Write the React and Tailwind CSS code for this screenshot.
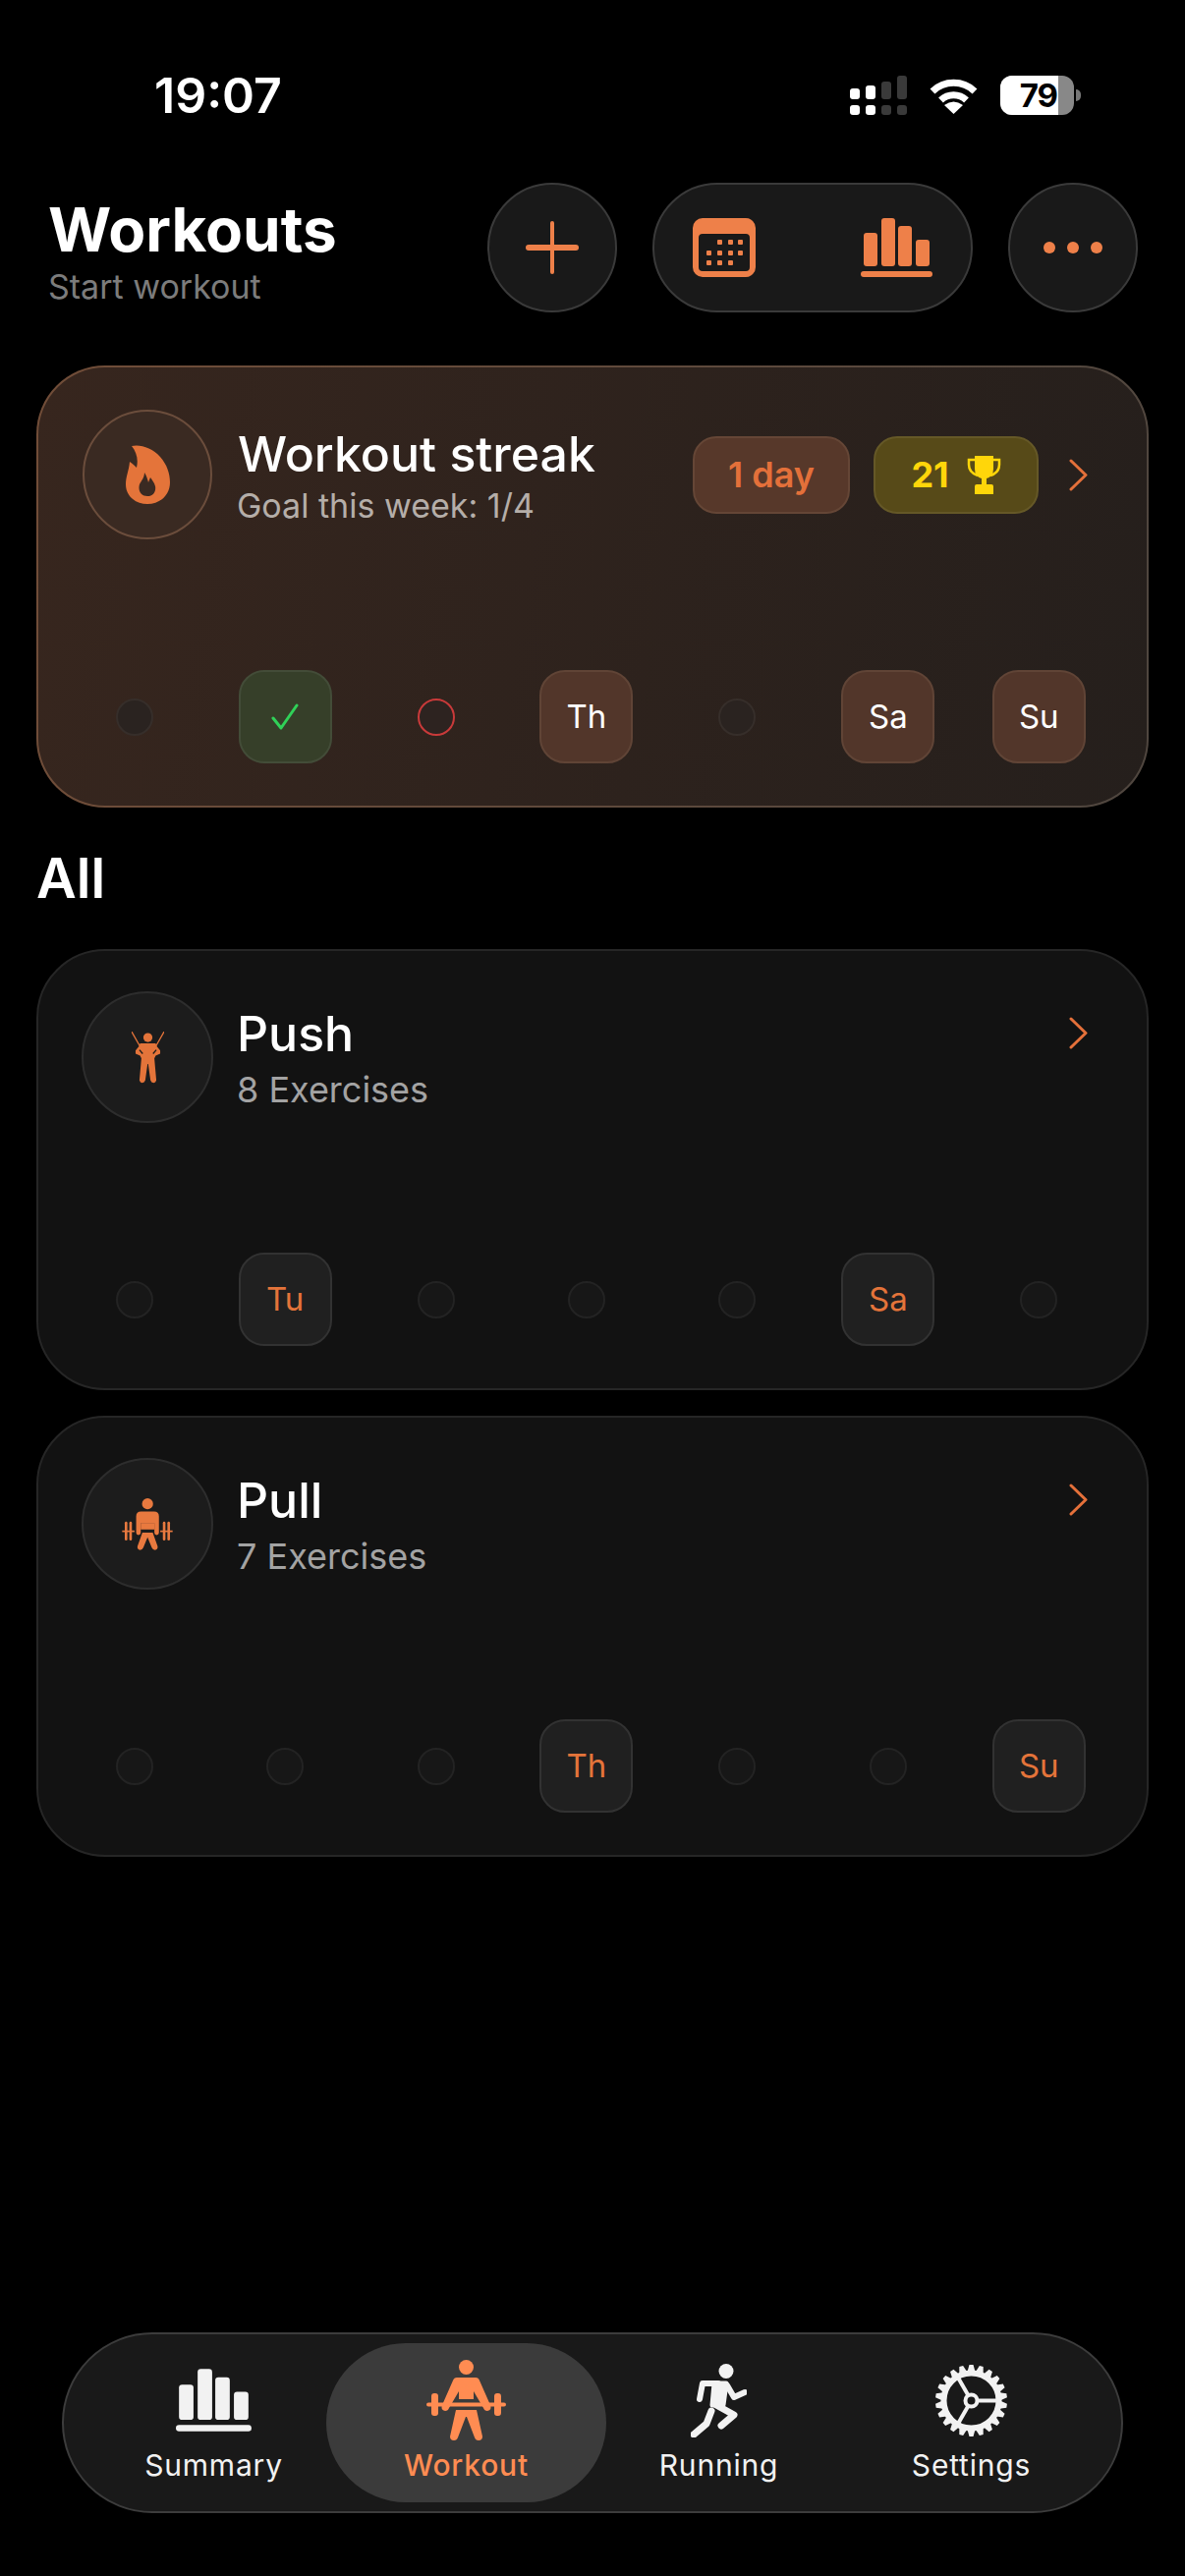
import React from 'react';

const ORANGE = '#ee8049';

const CalendarIcon = () => (
  <svg width="64" height="60" viewBox="0 0 64 60">
    <path fillRule="evenodd" fill={ORANGE} d="M10 0h44a10 10 0 0 1 10 10v40a10 10 0 0 1-10 10H10A10 10 0 0 1 0 50V10A10 10 0 0 1 10 0ZM10 16a4 4 0 0 0-4 4v30a4 4 0 0 0 4 4h44a4 4 0 0 0 4-4V20a4 4 0 0 0-4-4Z" />
    {[[25, 22], [36, 22], [46, 22], [14, 33], [25, 33], [36, 33], [46, 33], [14, 43], [25, 43], [36, 43]].map(([x, y]) => (
      <rect key={`${x}-${y}`} x={x} y={y} width="5" height="5" rx="1" fill={ORANGE} />
    ))}
  </svg>
);

const BarsIcon = ({ color, width = 73, height = 60 }) => (
  <svg width={width} height={height} viewBox="0 0 73 60" fill={color}>
    <rect x="3" y="15" width="14" height="34" rx="3" />
    <rect x="21" y="0" width="14" height="49" rx="3" />
    <rect x="38" y="8" width="14" height="41" rx="3" />
    <rect x="56" y="22" width="14" height="27" rx="3" />
    <rect x="0" y="54" width="73" height="6" rx="3" />
  </svg>
);

const Chevron = () => (
  <svg width="19" height="33" viewBox="0 0 19 33" fill="none" stroke="#e4703a" strokeWidth="3" strokeLinecap="round" strokeLinejoin="round">
    <path d="M2 2l15 14.500L2 31" />
  </svg>
);

const FlameIcon = () => (
  <svg width="45" height="60" viewBox="0 0 45 60">
    <path fillRule="evenodd" fill="#e4743a" d="M6 1C15-1 27 3 35 12 42 20 45 29 45 38 45 51 35 60 22 60 10 60 0 52 0 40 0 32 3 27 4 17 7 19 9 21 11 23 13 15 11 7 6 1ZM19 28C19 33 16 36 14 40 12 47 16 52 22 52 28 52 31 47 30 42 29 38 27 36 25 33L23 38C22 34 21 31 19 28Z" />
  </svg>
);

const PushIcon = () => (
  <svg width="33" height="53" viewBox="0 0 100 160" fill="#e4743a">
    <circle cx="50" cy="18" r="14" />
    <path d="M0 0L26 46M100 0L74 46" stroke="#e4743a" strokeWidth="4" />
    <path d="M26 36H74L78 46 88 58V68L74 74 70 82 76 150Q74 158 68 158 60 158 58 150L51 100H49L42 150Q40 158 32 158 26 158 24 150L30 82 26 74 12 68V58L22 46Z" />
    <path d="M24 56L34 68M76 56L66 68" stroke="#1b1b1b" strokeWidth="4" />
  </svg>
);

const PullIcon = () => (
  <svg width="52" height="53" viewBox="0 0 155 160" fill="#e8793f">
    <circle cx="78" cy="17" r="17" />
    <path d="M58 41H98Q113 41 113 56V106Q113 113 106 113 99 113 99 106V76H57V106Q57 113 50 113 43 113 43 106V56Q43 41 58 41Z" />
    <rect x="57" y="76" width="42" height="20" />
    <path d="M62 106H94L109 148Q110 158 101 159 94 159 91 152L78 120 65 152Q62 159 55 159 46 158 47 148Z" />
    <rect x="0" y="99" width="38" height="5" />
    <rect x="117" y="99" width="38" height="5" />
    <rect x="8" y="72" width="8" height="58" rx="4" />
    <rect x="22" y="72" width="8" height="58" rx="4" />
    <rect x="125" y="72" width="8" height="58" rx="4" />
    <rect x="139" y="72" width="8" height="58" rx="4" />
  </svg>
);

const LifterIcon = () => (
  <svg width="81" height="83" viewBox="0 0 81 83" fill="#ff8c52">
    <circle cx="40.500" cy="7.500" r="7.500" />
    <path d="M31 18H50Q53 18 54 21L65 46Q67 51 62 52 59 52 58 49L48 32V40H33V32L23 49Q22 52 19 52 14 51 16 46L27 21Q28 18 31 18Z" />
    <rect x="0" y="43.500" width="81" height="4" rx="2" />
    <rect x="5" y="34" width="7" height="23" rx="3" />
    <rect x="69" y="34" width="7" height="23" rx="3" />
    <path d="M30 51H51L57 78Q57 82 53 82 50 82 49 79L41 58H40L32 79Q31 82 28 82 24 82 24 78Z" />
  </svg>
);

const RunnerIcon = () => (
  <svg width="57" height="75" viewBox="0 0 57 75" fill="none" stroke="#f2f2f2" strokeLinecap="round" strokeLinejoin="round">
    <circle cx="36" cy="7.500" r="7.500" fill="#f2f2f2" stroke="none" />
    <path d="M28 20H12L9 36" strokeWidth="6" />
    <path d="M37 22L44 34 55 29" strokeWidth="6" />
    <path d="M24 20H36L33 42H22Z" fill="#f2f2f2" strokeWidth="5" />
    <path d="M26 42L44 52 31 63" strokeWidth="7" />
    <path d="M21 48L16 61 3 72" strokeWidth="7" />
  </svg>
);

const GearIcon = () => (
  <svg width="75" height="75" viewBox="0 0 75 75" fill="none" stroke="#f2f2f2">
    <circle cx="37.500" cy="37.500" r="28" strokeWidth="6" />
    <circle cx="37.500" cy="37.500" r="6" strokeWidth="4" />
    {[0, 120, 240].map((a) => (
      <path key={a} d="M43 37.500H66" strokeWidth="4" transform={`rotate(${a} 37.500 37.500)`} />
    ))}
    {Array.from({ length: 22 }, (_, i) => (
      <path key={i} d="M33.500 8L35.500 1H39.500L41.500 8Z" fill="#f2f2f2" stroke="none" transform={`rotate(${(i * 360) / 22} 37.500 37.500)`} />
    ))}
  </svg>
);

const TrophyIcon = () => (
  <svg width="35" height="39" viewBox="0 0 35 39" fill="#ffd60a">
    <path d="M8 0H27V13Q27 21 20 23V29H25Q27 29 27 31V39H8V31Q8 29 10 29H15V23Q8 21 8 13Z" />
    <path d="M8 4H2V9Q2 17 11 20M27 4H33V9Q33 17 24 20" fill="none" stroke="#ffd60a" strokeWidth="2.500" />
  </svg>
);

const StatusBar = () => (
  <div className="mt-[77px] h-[40px] flex items-center justify-between pl-[157px] pr-[106px] shrink-0">
    <span className="text-[50px] leading-[40px] font-semibold text-white">19:07</span>
    <div className="flex items-center">
      <div className="flex items-end gap-[6px]">
        {[
          ['h-[11px]', 'bg-white'],
          ['h-[14px]', 'bg-white'],
          ['h-[18px]', 'bg-[#3a3a3a]'],
          ['h-[24px]', 'bg-[#3a3a3a]'],
        ].map(([h, bg], i) => (
          <div key={i} className="flex flex-col gap-[6px] w-[10px]">
            <div className={`${h} ${bg} rounded-[3px]`} />
            <div className={`h-[10px] ${bg} rounded-[3px]`} />
          </div>
        ))}
      </div>
      <svg className="ml-[23px]" width="49" height="38" viewBox="0 0 49 38" fill="none" stroke="#fff" strokeWidth="7">
        <path d="M3 15A31 31 0 0 1 46 15" />
        <path d="M11.500 24A19 19 0 0 1 37.500 24" />
        <path d="M24.500 38L15 29Q24.500 22 34 29Z" fill="#fff" stroke="none" />
      </svg>
      <div className="ml-[23px] w-[75px] h-[40px] rounded-[12px] flex bg-[#888888]">
        <div className="w-[59px] rounded-l-[12px] bg-white flex items-center justify-end pr-[1px]">
          <span className="text-[33px] leading-none font-bold tracking-[-1px] text-black">79</span>
        </div>
      </div>
      <div className="ml-[2px] w-[5px] h-[12px] rounded-r-full bg-[#777777]" />
    </div>
  </div>
);

const Header = () => (
  <div className="mt-[69px] h-[132px] flex items-center pl-[49px] pr-[48px] shrink-0">
    <div className="flex-1 pt-[10px]">
      <h1 className="text-[62px] leading-[62px] font-bold text-white">Workouts</h1>
      <p className="mt-[8px] text-[34px] leading-[38px] text-[#7c7c7c]">Start workout</p>
    </div>
    <button className="w-[132px] h-[132px] rounded-full bg-[#191919] border-2 border-[#3a3a3a] flex items-center justify-center">
      <svg width="54" height="54" viewBox="0 0 54 54" fill={ORANGE}>
        <rect x="25" y="0" width="4" height="54" rx="2" />
        <rect x="0" y="24" width="54" height="6" rx="3" />
      </svg>
    </button>
    <div className="ml-[36px] w-[326px] h-[132px] rounded-[66px] bg-[#191919] border-2 border-[#3a3a3a] flex items-center justify-between pl-[39px] pr-[39px]">
      <CalendarIcon />
      <BarsIcon color={ORANGE} />
    </div>
    <button className="ml-[36px] w-[132px] h-[132px] rounded-full bg-[#191919] border-2 border-[#3a3a3a] flex items-center justify-center gap-[12px]">
      <span className="w-[12px] h-[12px] rounded-full bg-[#ee8049]" />
      <span className="w-[12px] h-[12px] rounded-full bg-[#ee8049]" />
      <span className="w-[12px] h-[12px] rounded-full bg-[#ee8049]" />
    </button>
  </div>
);

const DayRow = ({ days, warm }) => (
  <div className="grid grid-cols-7 pl-[21px] pr-[33px] mt-auto mb-[43px]">
    {days.map((d, i) => (
      <div key={i} className="h-[95px] flex items-center justify-center">
        {d === null && (
          <div className={`w-[38px] h-[38px] rounded-full border-2 ${warm ? 'bg-[#2a2320] border-[#362e2a]' : 'bg-[#171717] border-[#232323]'}`} />
        )}
        {d === 'missed' && <div className="w-[38px] h-[38px] rounded-full border-2 border-[#c93a3a] bg-[#2d2320]" />}
        {d === 'done' && (
          <div className="w-[95px] h-[95px] rounded-[26px] bg-[#363f29] border-2 border-[#434c38] flex items-center justify-center">
            <svg width="28" height="27" viewBox="0 0 28 27" fill="none" stroke="#30d158" strokeWidth="3" strokeLinecap="round" strokeLinejoin="round">
              <path d="M2 15L10 25 26 2" />
            </svg>
          </div>
        )}
        {typeof d === 'string' && d !== 'missed' && d !== 'done' && (
          <div className={`w-[95px] h-[95px] rounded-[26px] border-2 flex items-center justify-center text-[33px] leading-none ${warm ? 'bg-[#52362a] border-[#604436] text-white' : 'bg-[#202020] border-[#323232] text-[#e4743a]'}`}>
            {d}
          </div>
        )}
      </div>
    ))}
  </div>
);

const StreakCard = () => (
  <div className="mx-[37px] mt-[54px] h-[450px] rounded-[70px] border-2 border-transparent flex flex-col shrink-0 [background:linear-gradient(100deg,#37261e,#251f1c)_padding-box,linear-gradient(100deg,#714d38,#4f463f)_border-box]">
    <div className="flex items-center pl-[45px] pr-[60px] mt-[43px]">
      <div className="w-[132px] h-[132px] rounded-full border-2 border-[#6b4d3c] bg-[#3a2a22] flex items-center justify-center shrink-0">
        <FlameIcon />
      </div>
      <div className="ml-[26px] flex-1 pt-[2px]">
        <div className="text-[50px] leading-[56px] font-medium text-white">Workout streak</div>
        <div className="mt-[6px] text-[34px] leading-[38px] text-[#b5aea9] -ml-[1px]">Goal this week: 1/4</div>
      </div>
      <div className="w-[160px] h-[79px] rounded-[24px] bg-[#57382a] border-2 border-[#654636] flex items-center justify-center text-[36px] leading-none font-semibold text-[#e4703a]">
        1 day
      </div>
      <div className="ml-[24px] w-[168px] h-[79px] rounded-[24px] bg-[#574a18] border-2 border-[#655827] flex items-center justify-center gap-[18px] text-[36px] leading-none font-bold text-[#ffd60a]">
        21
        <TrophyIcon />
      </div>
      <div className="ml-[31px]">
        <Chevron />
      </div>
    </div>
    <DayRow warm days={[null, 'done', 'missed', 'Th', null, 'Sa', 'Su']} />
  </div>
);

const RoutineCard = ({ name, count, icon, days, className }) => (
  <div className={`mx-[37px] h-[449px] rounded-[70px] bg-[#121212] border-2 border-[#262626] flex flex-col shrink-0 ${className}`}>
    <div className="flex items-start pl-[44px] pr-[60px] mt-[41px]">
      <div className="w-[134px] h-[134px] rounded-full border-2 border-[#2d2d2d] bg-[#1c1c1c] flex items-center justify-center shrink-0">
        {icon}
      </div>
      <div className="ml-[24px] flex-1 pt-[15px]">
        <div className="text-[50px] leading-[56px] font-medium text-white">{name}</div>
        <div className="mt-[8px] text-[36px] leading-[42px] text-[#a3a3a3]">{count}</div>
      </div>
      <div className="mt-[26px]">
        <Chevron />
      </div>
    </div>
    <DayRow days={days} />
  </div>
);

const tabs = [
  { label: 'Summary', icon: <BarsIcon color="#f2f2f2" width={77} height={64} /> },
  { label: 'Workout', icon: <LifterIcon />, active: true },
  { label: 'Running', icon: <RunnerIcon /> },
  { label: 'Settings', icon: <GearIcon /> },
];

const TabBar = () => (
  <div className="mt-auto mb-[64px] mx-[63px] h-[184px] rounded-[92px] bg-[#191919] border-2 border-[#3c3c3c] grid grid-cols-4 px-[24px] py-[9px] shrink-0">
    {tabs.map((t) => (
      <div
        key={t.label}
        className={`flex flex-col items-center justify-end rounded-[81px] pb-[20px] ${t.active ? '-mx-[14px] bg-[#3b3b3b] text-[#ff8c52] font-medium' : 'text-[#f2f2f2] font-normal'}`}
      >
        <div className="h-[84px] flex items-center justify-center">{t.icon}</div>
        <span className="mt-[6px] text-[30px] leading-[36px] tracking-[0.8px]">{t.label}</span>
      </div>
    ))}
  </div>
);

export default function App() {
  return (
    <div className="w-[1206px] h-[2622px] bg-black flex flex-col font-[Inter,sans-serif] overflow-hidden">
      <StatusBar />
      <Header />
      <StreakCard />
      <h2 className="mx-[37px] h-[144px] flex items-center text-[56px] font-semibold text-white shrink-0">All</h2>
      <RoutineCard name="Push" count="8 Exercises" icon={<PushIcon />} days={[null, 'Tu', null, null, null, 'Sa', null]} />
      <RoutineCard name="Pull" count="7 Exercises" icon={<PullIcon />} days={[null, null, null, 'Th', null, null, 'Su']} className="mt-[26px]" />
      <TabBar />
    </div>
  );
}
